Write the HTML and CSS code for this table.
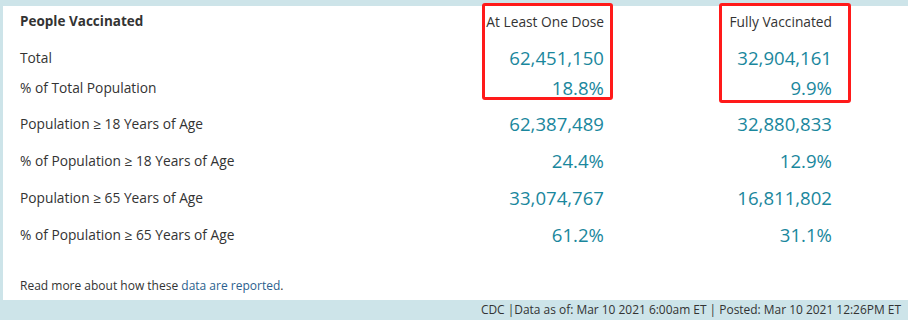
FILE: index.html
```html
<!DOCTYPE html>
<html lang="en">
<head>
<meta charset="utf-8">
<title>People Vaccinated</title>
<link rel="stylesheet" href="styles.css">
</head>
<body>
<div class="page">
  <div class="panel">
    <div class="row head">
      <div class="label strong">People Vaccinated</div>
      <div class="col colhead">At Least One Dose</div>
      <div class="col colhead">Fully Vaccinated</div>
    </div>
    <div class="row short">
      <div class="label">Total</div>
      <div class="col num">62,451,150</div>
      <div class="col num">32,904,161</div>
    </div>
    <div class="row short">
      <div class="label">% of Total Population</div>
      <div class="col num">18.8%</div>
      <div class="col num">9.9%</div>
    </div>
    <div class="rows-tall">
      <div class="row tall">
        <div class="label">Population ≥ 18 Years of Age</div>
        <div class="col num">62,387,489</div>
        <div class="col num">32,880,833</div>
      </div>
      <div class="row tall">
        <div class="label">% of Population ≥ 18 Years of Age</div>
        <div class="col num">24.4%</div>
        <div class="col num">12.9%</div>
      </div>
      <div class="row tall">
        <div class="label">Population ≥ 65 Years of Age</div>
        <div class="col num">33,074,767</div>
        <div class="col num">16,811,802</div>
      </div>
      <div class="row tall">
        <div class="label">% of Population ≥ 65 Years of Age</div>
        <div class="col num">61.2%</div>
        <div class="col num">31.1%</div>
      </div>
    </div>
    <p class="note">Read more about how these <a href="#" class="link">data are reported</a>.</p>
    <div class="mark mark-one"></div>
    <div class="mark mark-two"></div>
  </div>
  <div class="footer">CDC |Data as of: Mar 10 2021 6:00am ET | Posted: Mar 10 2021 12:26PM ET</div>
</div>
</body>
</html>
```

FILE: styles.css
```css
* { box-sizing: border-box; }
html, body {
  margin: 0;
  padding: 0;
  background: #cde4e9;
}
body {
  font-family: "Open Sans", "Liberation Sans", sans-serif;
  color: #333;
  width: 908px;
  height: 320px;
  overflow: hidden;
}
.page {
  padding: 6px 0 0 3px;
}
.panel {
  position: relative;
  background: #fff;
  height: 294px;
  padding: 0 0 0 17px;
}
.row {
  display: flex;
  align-items: center;
}
.head {
  height: 30px;
  margin-bottom: 6px;
}
.short { height: 30px; }
.rows-tall { margin-top: 3px; }
.tall { height: 37px; }
.label {
  width: 385px;
  font-size: 13.75px;
}
.strong {
  font-weight: 700;
  font-size: 13.5px;
}
.col {
  text-align: right;
}
.col:nth-child(2) { width: 199px; }
.col:nth-child(3) { width: 228px; }
.colhead {
  font-size: 13.75px;
  color: #333;
}
.num {
  font-size: 18.6px;
  color: #1a879d;
}
.note {
  margin: 25px 0 0;
  font-size: 12px;
  line-height: 16px;
  color: #333;
}
.link {
  color: #2b5f8e;
  text-decoration: none;
}
.mark {
  position: absolute;
  border: 3px solid #ff1a1a;
  border-radius: 3px;
}
.mark-one {
  left: 479px;
  top: -3px;
  width: 131px;
  height: 97px;
}
.mark-two {
  left: 716px;
  top: -3px;
  width: 132px;
  height: 100px;
}
.footer {
  height: 20px;
  line-height: 20px;
  text-align: right;
  font-size: 11.95px;
  padding-right: 7px;
  color: #333;
}
```
